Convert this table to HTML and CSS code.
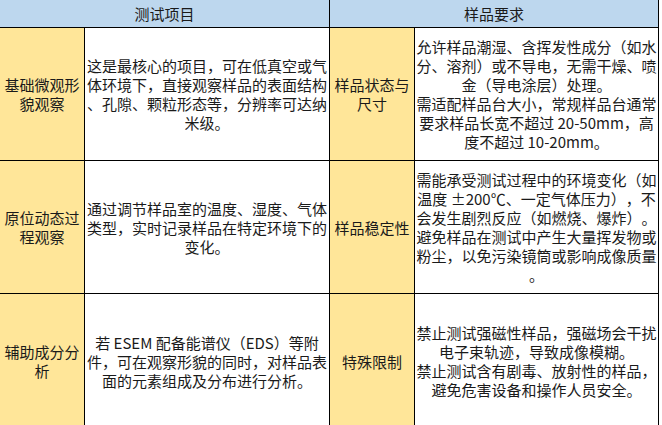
FILE: index.html
```html
<!DOCTYPE html>
<html lang="zh">
<head>
<meta charset="utf-8">
<title>ESEM 测试项目与样品要求</title>
<link rel="stylesheet" href="styles.css">
</head>
<body>
<div class="sheet">
  <div class="head span2">测试项目</div>
  <div class="head span2">样品要求</div>

  <div class="cell key">基础微观形<br>貌观察</div>
  <div class="cell">这是最核心的项目，可在低真空或气<br>体环境下，直接观察样品的表面结构<br>、孔隙、颗粒形态等，分辨率可达纳<br>米级。</div>
  <div class="cell key">样品状态与<br>尺寸</div>
  <div class="cell">允许样品潮湿、含挥发性成分（如水<br>分、溶剂）或不导电，无需干燥、喷<br>金（导电涂层）处理。<br>需适配样品台大小，常规样品台通常<br>要求样品长宽不超过 20-50mm，高<br>度不超过 10-20mm。</div>

  <div class="cell key">原位动态过<br>程观察</div>
  <div class="cell">通过调节样品室的温度、湿度、气体<br>类型，实时记录样品在特定环境下的<br>变化。</div>
  <div class="cell key">样品稳定性</div>
  <div class="cell">需能承受测试过程中的环境变化（如<br>温度 ±200℃、一定气体压力），不<br>会发生剧烈反应（如燃烧、爆炸）。<br>避免样品在测试中产生大量挥发物或<br>粉尘，以免污染镜筒或影响成像质量<br>。</div>

  <div class="cell key">辅助成分分<br>析</div>
  <div class="cell">若 ESEM 配备能谱仪（EDS）等附<br>件，可在观察形貌的同时，对样品表<br>面的元素组成及分布进行分析。</div>
  <div class="cell key">特殊限制</div>
  <div class="cell">禁止测试强磁性样品，强磁场会干扰<br>电子束轨迹，导致成像模糊。<br>禁止测试含有剧毒、放射性的样品，<br>避免危害设备和操作人员安全。</div>
</div>
</body>
</html>
```

FILE: styles.css
```css
html, body {
  margin: 0;
  padding: 0;
  background: #ffffff;
  overflow: hidden;
}

body {
  font-family: "Noto Sans CJK SC", "Noto Sans", "Liberation Sans", sans-serif;
  font-size: 15px;
  color: #1a1a1a;
  text-spacing-trim: space-all;
}

.sheet {
  display: grid;
  grid-template-columns: 84px 244px 84px 243px;
  grid-template-rows: 27px 132px 132px 134px;
  gap: 1px;
  width: 658px;
  background: #000000;
  border-right: 1px solid #000000;
}

.head {
  background: #bdd7ee;
  display: flex;
  align-items: center;
  justify-content: center;
  line-height: 19px;
}

.span2 {
  grid-column: span 2;
}

.cell {
  background: #ffffff;
  display: flex;
  align-items: center;
  justify-content: center;
  text-align: center;
  line-height: 19px;
  white-space: nowrap;
  padding: 0 1px;
}

.key {
  background: #ffe699;
}
```
